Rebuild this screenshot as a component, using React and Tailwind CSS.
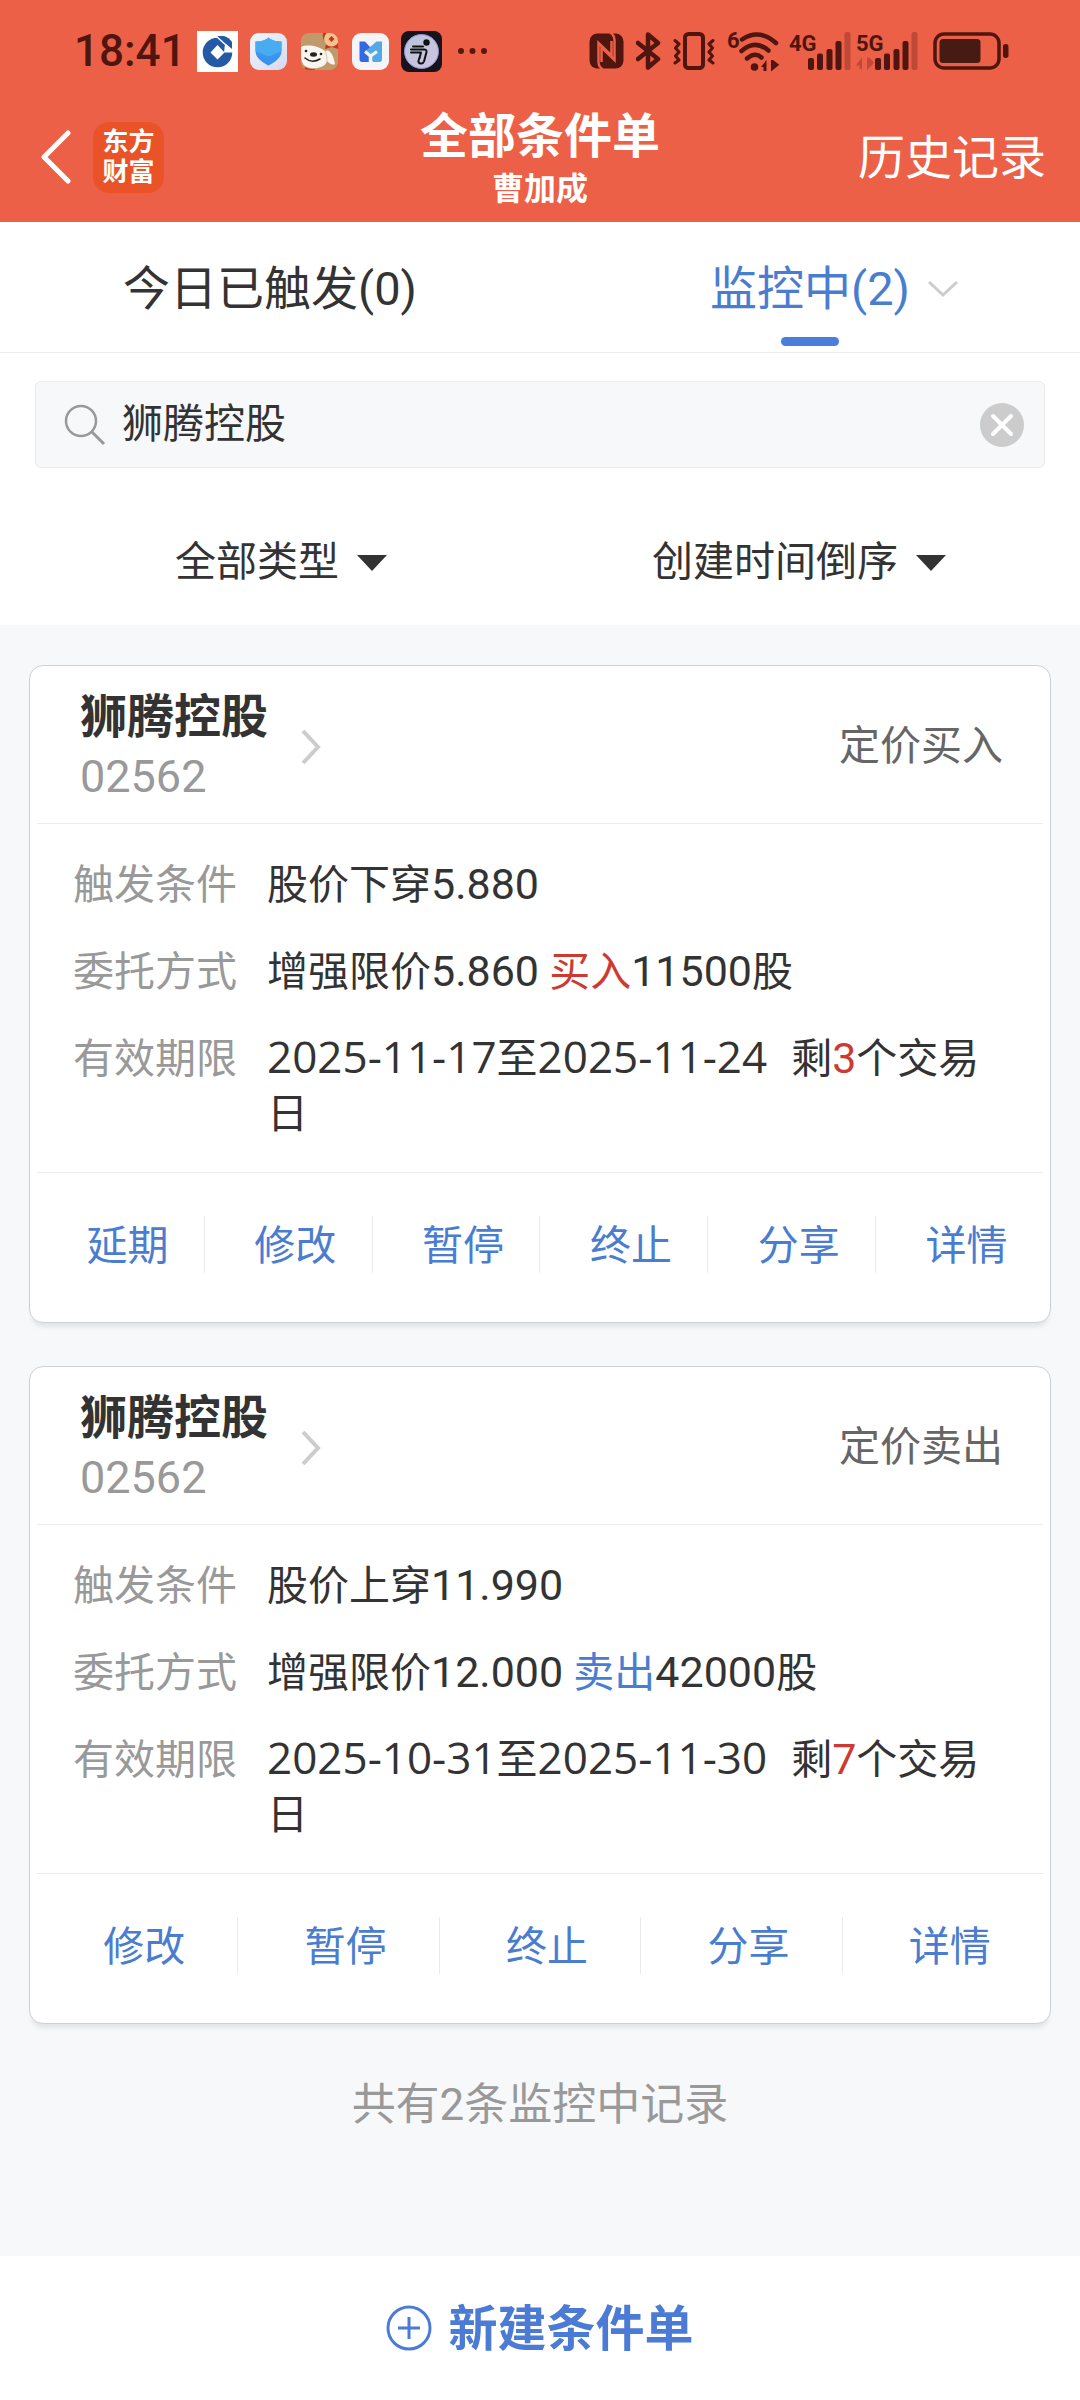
import { useState } from 'react';

const orders = [
  {
    id: 'buy',
    name: '狮腾控股',
    code: '02562',
    type: '定价买入',
    trigger: ['股价下穿', '5.880'],
    price: '5.860',
    side: '买入',
    sideColor: 'text-[#cd3a32]',
    amount: '11500',
    from: '2025-11-17',
    to: '2025-11-24',
    daysLeft: '3',
    actions: ['延期', '修改', '暂停', '终止', '分享', '详情'],
  },
  {
    id: 'sell',
    name: '狮腾控股',
    code: '02562',
    type: '定价卖出',
    trigger: ['股价上穿', '11.990'],
    price: '12.000',
    side: '卖出',
    sideColor: 'text-[#4a7dd0]',
    amount: '42000',
    from: '2025-10-31',
    to: '2025-11-30',
    daysLeft: '7',
    actions: ['修改', '暂停', '终止', '分享', '详情'],
  },
];

function AppNotifications() {
  return (
    <div className="flex items-center">
      <svg width="41" height="41" viewBox="0 0 41 41" aria-hidden="true">
        <rect width="41" height="41" fill="#fff" />
        <circle cx="20.500" cy="21.500" r="14.800" fill="#2459a5" />
        <path d="M28 13 L37 9 V21.500 H27 Z" fill="#fff" />
        <path d="M21 5 H27 Q32 6.500 35 11 V18 L20 5.500 Z" fill="#2459a5" />
        <path d="M19.500 5.500 L35 19.500" stroke="#fff" strokeWidth="1.500" />
        <path d="M20.500 14 L27.500 21.500 L20.500 28.500 L13.500 21.500 Z" fill="#fff" />
      </svg>
      <svg className="ml-3" width="37" height="37" viewBox="0 0 37 37" aria-hidden="true">
        <defs>
          <linearGradient id="tile" x1="0" y1="0" x2="1" y2="1">
            <stop offset="0" stopColor="#f4f6fb" />
            <stop offset="1" stopColor="#d5d9ee" />
          </linearGradient>
          <linearGradient id="guard" x1="0" y1="0" x2="0" y2="1">
            <stop offset="0" stopColor="#3fa2ee" />
            <stop offset="1" stopColor="#398ff0" />
          </linearGradient>
        </defs>
        <rect width="37" height="37" rx="9" fill="url(#tile)" />
        <path d="M18.500 4.500 C22 8 27 8.500 31.500 8.500 V18 C31.500 25 25 29 18.500 32.500 C12 29 5.500 25 5.500 18 V8.500 C10 8.500 15 8 18.500 4.500 Z" fill="url(#guard)" />
        <path d="M18.500 4.500 C22 8 27 8.500 31.500 8.500 V18 L18.500 23.500 L5.500 18 V8.500 C10 8.500 15 8 18.500 4.500 Z" fill="#49acf0" />
      </svg>
      <svg className="ml-3.5" width="37" height="37" viewBox="0 0 37 37" aria-hidden="true">
        <defs>
          <clipPath id="dogTile">
            <rect width="37" height="37" rx="8" />
          </clipPath>
        </defs>
        <g clipPath="url(#dogTile)">
          <rect width="37" height="37" fill="#c09a6b" />
          <path d="M22 0 H37 V16 L31 14 L24 16 L25 11 Q21 6 22 0 Z" fill="#c4361f" />
          <circle cx="30.500" cy="6" r="7.500" fill="#f2c48d" />
          <path d="M30.500 3 L33.500 6 L30.500 9 L27.500 6 Z" fill="#c4361f" />
          <path d="M0 14 C6 11 18 13 24 18 C30 15 33 25 34 31 C32 33 28 30 26 28 C24 36 10 37 4 33 C0 30 -1 22 0 14 Z" fill="#f8f4ee" />
          <path d="M24 18 C26 22 26 26 26 29" fill="none" stroke="#d9c7ae" strokeWidth="1" />
          <ellipse cx="12.500" cy="21.500" rx="3.500" ry="2.200" fill="#222" />
          <circle cx="5" cy="18" r="1.300" fill="#222" />
          <circle cx="20" cy="21" r="1.300" fill="#222" />
          <path d="M4 25 Q11 31 19 26" fill="none" stroke="#222" strokeWidth="1.500" strokeLinecap="round" />
          <path d="M4 34 Q9 37 14 36 V37 H3 Z" fill="#c4361f" />
        </g>
      </svg>
      <svg className="ml-3.5" width="37" height="37" viewBox="0 0 37 37" aria-hidden="true">
        <rect width="37" height="37" rx="9" fill="#f5f5f8" />
        <path d="M7.500 8.500 H13 L18.500 14.500 L17 29 H10 Q7.500 29 7.500 26 Z" fill="#3469e4" />
        <path d="M30 8.500 H24.500 L13.500 18 L21 29 H27.500 Q30 29 30 26 Z" fill="#52a9e6" />
        <path d="M13 18.500 L18.500 23 L25 18.500" fill="none" stroke="#f5f5f8" strokeWidth="3" />
        <path d="M18.500 21.500 V29.500" stroke="#f5f5f8" strokeWidth="3.500" />
      </svg>
      <svg className="ml-3" width="41" height="41" viewBox="0 0 41 41" aria-hidden="true">
        <defs>
          <linearGradient id="orb" x1="0" y1="0" x2="1" y2="1">
            <stop offset="0" stopColor="#b9c3de" />
            <stop offset="1" stopColor="#cfc4dd" />
          </linearGradient>
        </defs>
        <rect width="41" height="41" rx="8" fill="#17131c" />
        <circle cx="20.500" cy="20.500" r="17" fill="url(#orb)" stroke="#8f8fd2" strokeWidth="1" />
        <circle cx="25.500" cy="11.500" r="3.200" fill="#111" />
        <g fill="none" stroke="#111" strokeWidth="2" strokeLinecap="round" strokeLinejoin="round">
          <path d="M10 18.500 H23 Q26 18.500 25.500 21 L23 30.500 Q22 33 19.500 32.500 Q17 32 17.500 29.500 L18.500 27" />
          <path d="M10 21.500 H20 L18.500 27 M12 15.500 H22" />
        </g>
      </svg>
      <svg className="ml-4" width="30" height="8" viewBox="0 0 30 8" aria-hidden="true">
        <circle cx="3" cy="4" r="3" fill="#5a170d" />
        <circle cx="14.500" cy="4" r="3" fill="#5a170d" />
        <circle cx="26" cy="4" r="3" fill="#5a170d" />
      </svg>
    </div>
  );
}

function SignalBars({ label, arrows, className }) {
  return (
    <svg className={className} width="63" height="40" viewBox="0 0 63 40" aria-hidden="true">
      <text x="0" y="20" fill="#4f150e" fontFamily="Roboto, sans-serif" fontWeight="700" fontSize="22">
        {label}
      </text>
      {arrows && <path d="M0 34.500 L6 26.500 V38 H3.500 V34.500 Z M17.500 32.500 L11 39 V26.500 H13 L17.500 31 Z" fill="#bd4936" />}
      <g fill="#4f150e">
        <rect x="19" y="27" width="6" height="12" rx="2" />
        <rect x="28" y="22.500" width="6" height="16.500" rx="2" />
        <rect x="37.500" y="18" width="6" height="21" rx="2" />
        <rect x="46.500" y="10" width="6" height="29" rx="2" />
      </g>
      <rect x="55.500" y="1" width="6" height="38" rx="2" fill="#bd4936" />
    </svg>
  );
}

function StatusBar() {
  return (
    <div className="flex h-[92px] items-center justify-between pt-2.5 pr-[71px] pl-[74px]">
      <div className="flex items-center">
        <span className="w-[123px] text-[44px] leading-none font-medium text-[#4f150e]">18:41</span>
        <AppNotifications />
      </div>
      <div className="flex items-center text-[#4f150e]">
        <svg width="35" height="36" viewBox="0 0 35 36" aria-hidden="true">
          <rect x=".5" y=".5" width="34" height="35" rx="8" fill="currentColor" />
          <g fill="none" stroke="#ec6047" strokeWidth="2.500">
            <path d="M14 36.500 Q9.500 34 9.500 29 V10 L22.500 22.500 V8" />
            <path d="M21 -.5 Q25.500 2 25.500 7 V27 L12.500 14.500 V29" />
          </g>
        </svg>
        <svg className="ml-3" width="25" height="38" viewBox="0 0 25 38" aria-hidden="true">
          <path d="M2 11 L22 27 L12 35.500 V2.500 L22 11 L2 27" fill="none" stroke="currentColor" strokeWidth="4.500" strokeLinejoin="round" strokeLinecap="round" />
        </svg>
        <svg className="ml-3" width="42" height="38" viewBox="0 0 42 38" aria-hidden="true">
          <rect x="12" y="2" width="18" height="34" rx="3.500" fill="none" stroke="currentColor" strokeWidth="4" />
          <g fill="none" stroke="currentColor" strokeWidth="3" strokeLinejoin="round" strokeLinecap="round">
            <path d="M2 8.500 L6 12 L2.500 16 L6 20 L2.500 24 L6 28 L2 31" />
            <path d="M40 8.500 L36 12 L39.500 16 L36 20 L39.500 24 L36 28 L40 31" />
          </g>
        </svg>
        <svg className="ml-3" width="52" height="50" viewBox="0 -4 52 50" aria-hidden="true">
          <text x="0" y="18" fill="currentColor" fontFamily="Roboto, sans-serif" fontWeight="700" fontSize="22">
            6
          </text>
          <g fill="none" stroke="currentColor" strokeWidth="4.500" strokeLinecap="round">
            <path d="M15 9.500 Q32 -2 49 13" />
            <path d="M14.500 21 Q28 9 41.500 20.500" />
            <path d="M20 28.500 Q28 21.500 34.500 27.500" />
          </g>
          <circle cx="27.500" cy="37" r="3.800" fill="currentColor" />
          <path d="M34 37 L39.500 30 V41 H36.500 V37 Z M52 35 L44 41.500 V30 H46 L52 34.500 Z" fill="currentColor" />
        </svg>
        <SignalBars label="4G" className="ml-2.5" />
        <SignalBars label="5G" arrows className="ml-1" />
        <svg className="ml-3.5" width="76" height="38" viewBox="0 0 76 38" aria-hidden="true">
          <rect x="2" y="2" width="64" height="34" rx="9" fill="none" stroke="currentColor" strokeWidth="3.500" />
          <rect x="6.500" y="7" width="41" height="24" rx="3.500" fill="#481a14" />
          <rect x="70" y="12" width="5.500" height="14" rx="2.700" fill="currentColor" />
        </svg>
      </div>
    </div>
  );
}

function Header() {
  return (
    <header className="bg-[#ec6047] text-white">
      <StatusBar />
      <div className="grid h-[130px] grid-cols-3 items-center px-[34px]">
        <div className="flex items-center gap-[22px]">
          <button type="button" aria-label="返回" className="pl-1.5">
            <svg width="31" height="54" viewBox="0 0 31 54" fill="none" stroke="currentColor" strokeWidth="5" aria-hidden="true">
              <path d="M28 3 L4 27 L28 51" strokeLinecap="round" strokeLinejoin="round" />
            </svg>
          </button>
          <div className="flex h-[71px] w-[71px] flex-col items-center justify-center rounded-2xl bg-[#ea5327] text-[26px] leading-[30px] font-bold">
            <span>东方</span>
            <span>财富</span>
          </div>
        </div>
        <div className="flex flex-col items-center pt-1">
          <h1 className="text-[48px] leading-[60px] font-bold whitespace-nowrap">全部条件单</h1>
          <p className="text-[32px] leading-[44px] font-bold">曹加成</p>
        </div>
        <a href="#history" className="pt-0.5 text-right text-[47px] leading-[60px]">历史记录</a>
      </div>
    </header>
  );
}

function Tabs({ tab, setTab }) {
  const items = [
    { id: 'triggered', label: '今日已触发(0)' },
    { id: 'watching', label: '监控中(2)', more: true },
  ];

  return (
    <div role="tablist" className="grid h-[131px] grid-cols-2 border-b border-[#ebebeb]">
      {items.map(item => {
        const active = tab === item.id;
        return (
          <button
            key={item.id}
            type="button"
            role="tab"
            aria-selected={active}
            onClick={() => setTab(item.id)}
            className={`relative flex items-center justify-center pt-1 text-[47px] leading-[60px] ${active ? 'text-[#4a7dd0]' : 'text-[#333]'}`}
          >
            <span className="relative">
              {item.label}
              {item.more && (
                <svg className="absolute top-1/2 left-full ml-4 -translate-y-1/2" width="34" height="18" viewBox="0 0 34 18" aria-hidden="true">
                  <path d="M3 2 L17 15 L31 2" fill="none" stroke="#ccc" strokeWidth="3" />
                </svg>
              )}
            </span>
            {active && <span className="absolute bottom-1.5 left-1/2 h-[9px] w-[58px] -translate-x-1/2 rounded-full bg-[#4a7fd9]" />}
          </button>
        );
      })}
    </div>
  );
}

function SearchBox() {
  const [query, setQuery] = useState('狮腾控股');

  return (
    <div className="mx-[35px] mt-7 flex h-[87px] items-center rounded-md border border-[#ebebeb] bg-[#f7f8fa] pr-5 pl-7">
      <svg className="shrink-0" width="42" height="42" viewBox="0 0 42 42" fill="none" stroke="#999" strokeWidth="2.500" aria-hidden="true">
        <circle cx="17" cy="17" r="15" />
        <path d="M27.500 27.500 L40 40" strokeWidth="3" />
      </svg>
      <input
        type="text"
        aria-label="搜索"
        value={query}
        onChange={e => setQuery(e.target.value)}
        className="ml-4 min-w-0 flex-1 bg-transparent text-[41px] leading-[55px] text-[#333] outline-none"
      />
      <button type="button" aria-label="清除" onClick={() => setQuery('')}>
        <svg width="44" height="44" viewBox="0 0 44 44" aria-hidden="true">
          <circle cx="22" cy="22" r="22" fill="#ccc" />
          <path d="M13 13 L31 31 M31 13 L13 31" stroke="#fff" strokeWidth="4" strokeLinecap="round" />
        </svg>
      </button>
    </div>
  );
}

function Filter({ label, value }) {
  return (
    <label className="flex items-center justify-center gap-[18px]">
      <select aria-label={label} className="appearance-none bg-transparent text-[41px] leading-[55px] text-[#333] outline-none">
        <option>{value}</option>
      </select>
      <svg width="30" height="16" viewBox="0 0 30 16" aria-hidden="true">
        <path d="M0 0 H30 L15 16 Z" fill="#333" />
      </svg>
    </label>
  );
}

function Num({ children }) {
  return <span className="text-[43px] leading-none">{children}</span>;
}

function DateText({ children }) {
  return <time dateTime={children} className="font-['Open_Sans'] text-[44px] leading-none">{children}</time>;
}

function Row({ label, children }) {
  return (
    <div className="flex gap-7">
      <dt className="w-[166px] shrink-0 text-[#999]">{label}</dt>
      <dd className="min-w-0 flex-1 text-[#333]">{children}</dd>
    </div>
  );
}

function OrderCard({ order }) {
  return (
    <article className="rounded-[14px] border border-[#ced0d4] bg-white px-[7px] shadow-[0_6px_4px_-2px_rgba(0,0,0,0.08)]">
      <div className="flex h-[158px] items-center justify-between border-b border-[#ebebeb] pt-1 pr-10 pl-[43px]">
        <button type="button" className="flex items-center gap-8 text-left">
          <span className="flex flex-col">
            <span className="text-[47px] leading-[60px] font-bold text-[#333]">{order.name}</span>
            <span className="text-[45px] leading-[60px] text-[#999]">{order.code}</span>
          </span>
          <svg width="22" height="36" viewBox="0 0 22 36" aria-hidden="true">
            <path d="M3 2 L18 18 L3 34" fill="none" stroke="#ccc" strokeWidth="4" />
          </svg>
        </button>
        <span className="text-[41px] leading-[55px] text-[#666]">{order.type}</span>
      </div>
      <dl className="flex flex-col gap-8 border-b border-[#ebebeb] pt-[34px] pr-10 pb-[30px] pl-9 text-[41px] leading-[55px]">
        <Row label="触发条件">
          {order.trigger[0]}
          <Num>{order.trigger[1]}</Num>
        </Row>
        <Row label="委托方式">
          增强限价
          <Num>{order.price}</Num> <span className={order.sideColor}>{order.side}</span>
          <Num>{order.amount}</Num>股
        </Row>
        <Row label="有效期限">
          <DateText>{order.from}</DateText>至<DateText>{order.to}</DateText>
          <span className="ml-6">
            剩
            <span className="text-[#cd3a32]">
              <Num>{order.daysLeft}</Num>
            </span>
            个交易
            <wbr />日
          </span>
        </Row>
      </dl>
      <div className="flex pt-[43px] pb-[49px]">
        {order.actions.map(action => (
          <button
            key={action}
            type="button"
            className="h-[57px] flex-1 border-r border-[#ebebeb] pt-1 pl-3.5 text-[41px] leading-[53px] text-[#4a7dd0] last:border-r-0"
          >
            {action}
          </button>
        ))}
      </div>
    </article>
  );
}

export default function App() {
  const [tab, setTab] = useState('watching');

  return (
    <div lang="zh-CN" className="flex min-h-screen flex-col bg-[#f7f8fa] font-['Roboto','Noto_Sans_CJK_SC',sans-serif]">
      <Header />
      <section className="bg-white pb-[35px]">
        <Tabs tab={tab} setTab={setTab} />
        <SearchBox />
        <div className="mt-[67px] grid grid-cols-2 px-[22px]">
          <Filter label="类型" value="全部类型" />
          <Filter label="排序" value="创建时间倒序" />
        </div>
      </section>
      <main className="flex flex-1 flex-col gap-[43px] px-[29px] pt-10">
        {orders.map(order => (
          <OrderCard key={order.id} order={order} />
        ))}
        <p className="pt-2 text-center text-[44px] leading-[60px] text-[#999]">共有2条监控中记录</p>
      </main>
      <footer className="bg-white">
        <button type="button" className="flex h-36 w-full items-center justify-center gap-4 text-[49px] leading-[60px] font-bold text-[#4b7bd4]">
          <svg width="46" height="46" viewBox="0 0 46 46" fill="none" stroke="currentColor" strokeWidth="3" aria-hidden="true">
            <circle cx="23" cy="23" r="21" />
            <path d="M23 12 V34 M12 23 H34" />
          </svg>
          <span className="pt-1">新建条件单</span>
        </button>
      </footer>
    </div>
  );
}
